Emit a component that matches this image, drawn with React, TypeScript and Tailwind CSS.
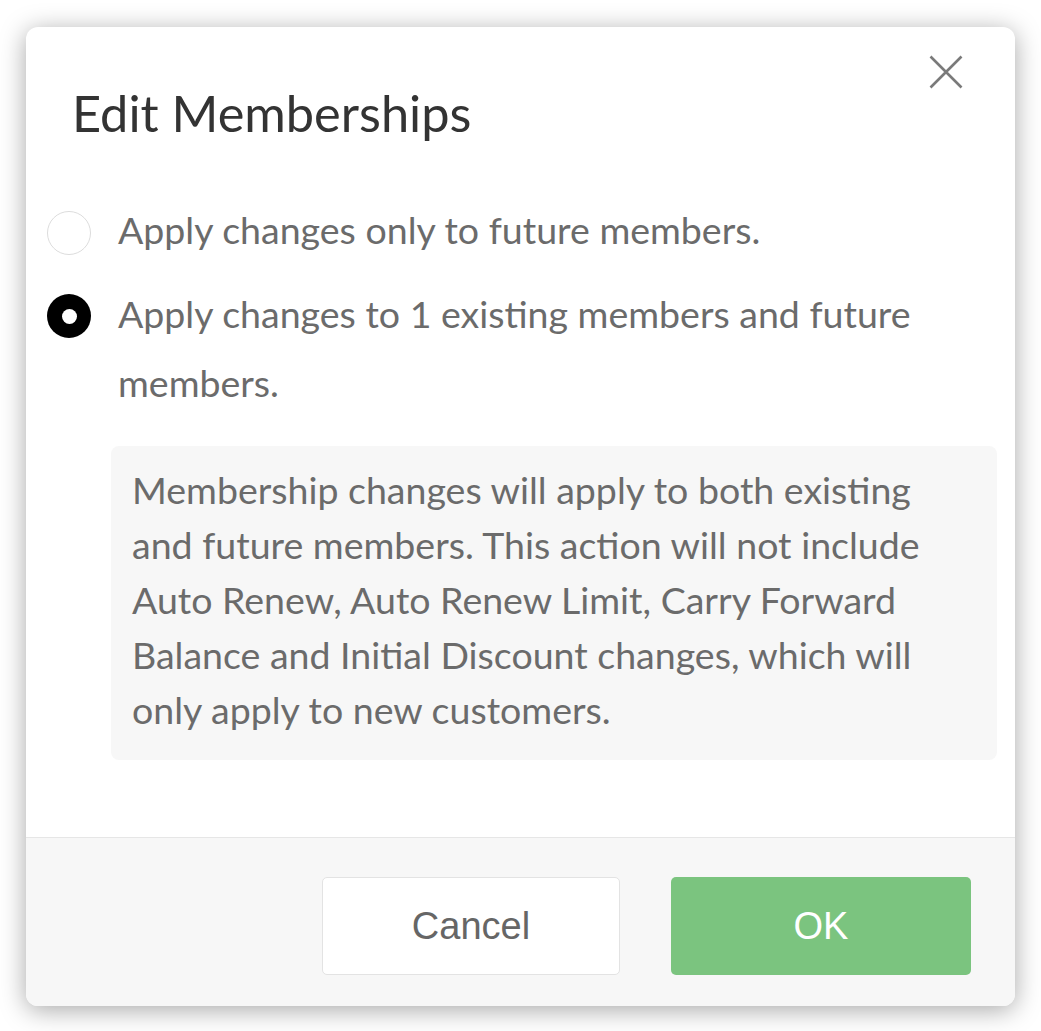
import React from "react";

export default function App() {
  const font = { fontFamily: "Lato, 'Open Sans', sans-serif" };
  return (
    <div className="w-[1041px] h-[1031px] bg-white pt-[27px] pl-[26px] overflow-hidden">
      <div
        className="relative w-[989px] h-[979px] rounded-[12px] bg-white shadow-[0_4px_26px_rgba(0,0,0,0.35)] flex flex-col overflow-hidden"
        style={font}
      >
        <button className="absolute right-[52px] top-[28px] w-[34px] h-[34px]" aria-label="Close">
          <svg viewBox="0 0 34 34" width="34" height="34">
            <path d="M1.5 1.5 L32.5 32.5 M32.5 1.5 L1.5 32.5" stroke="#7a7a7a" strokeWidth="2.6" fill="none" />
          </svg>
        </button>

        <div className="flex-1 pt-[57px]">
          <h1 className="pl-[46px] text-[50.5px] leading-[58px] text-[#333333] font-normal">Edit Memberships</h1>

          <div className="mt-[53px] pl-[21px] pr-[18px] flex flex-col gap-[15px]">
            <label className="flex items-start">
              <span className="mt-[16px] w-[44px] h-[44px] rounded-full border-[1.5px] border-[#dcdcdc] bg-white shrink-0" />
              <span className="ml-[27px] text-[37.5px] leading-[69px] text-[#6b6b6b]">
                Apply changes only to future members.
              </span>
            </label>
            <label className="flex items-start">
              <span className="mt-[15px] w-[44px] h-[44px] rounded-full bg-black shrink-0 flex items-center justify-center">
                <span className="w-[15px] h-[15px] rounded-full bg-white" />
              </span>
              <span className="ml-[27px] text-[37.5px] leading-[69px] text-[#6b6b6b]">
                Apply changes to 1 existing members and future
                <br />
                members.
              </span>
            </label>

            <div className="mt-[14px] ml-[64px] rounded-[8px] bg-[#f7f7f7] pl-[21px] pr-[10px] pt-[16px] pb-[23px] text-[37.5px] leading-[55px] text-[#6b6b6b]">
              Membership changes will apply to both existing
              <br />
              and future members. This action will not include
              <br />
              Auto Renew, Auto Renew Limit, Carry Forward
              <br />
              Balance and Initial Discount changes, which will
              <br />
              only apply to new customers.
            </div>
          </div>
        </div>

        <div className="h-[169px] border-t border-[#e6e6e6] bg-[#f7f7f7] flex justify-end items-start pt-[39px] pr-[44px] gap-[51px]">
          <button
            className="w-[298px] h-[98px] rounded-[5px] border border-[#e3e3e3] bg-white text-[38px] text-[#666666]"
            style={{ fontFamily: "'Liberation Sans', Arial, sans-serif" }}
          >
            Cancel
          </button>
          <button
            className="w-[300px] h-[98px] rounded-[5px] bg-[#7bc47f] text-[38px] text-white"
            style={{ fontFamily: "'Liberation Sans', Arial, sans-serif" }}
          >
            OK
          </button>
        </div>
      </div>
    </div>
  );
}
